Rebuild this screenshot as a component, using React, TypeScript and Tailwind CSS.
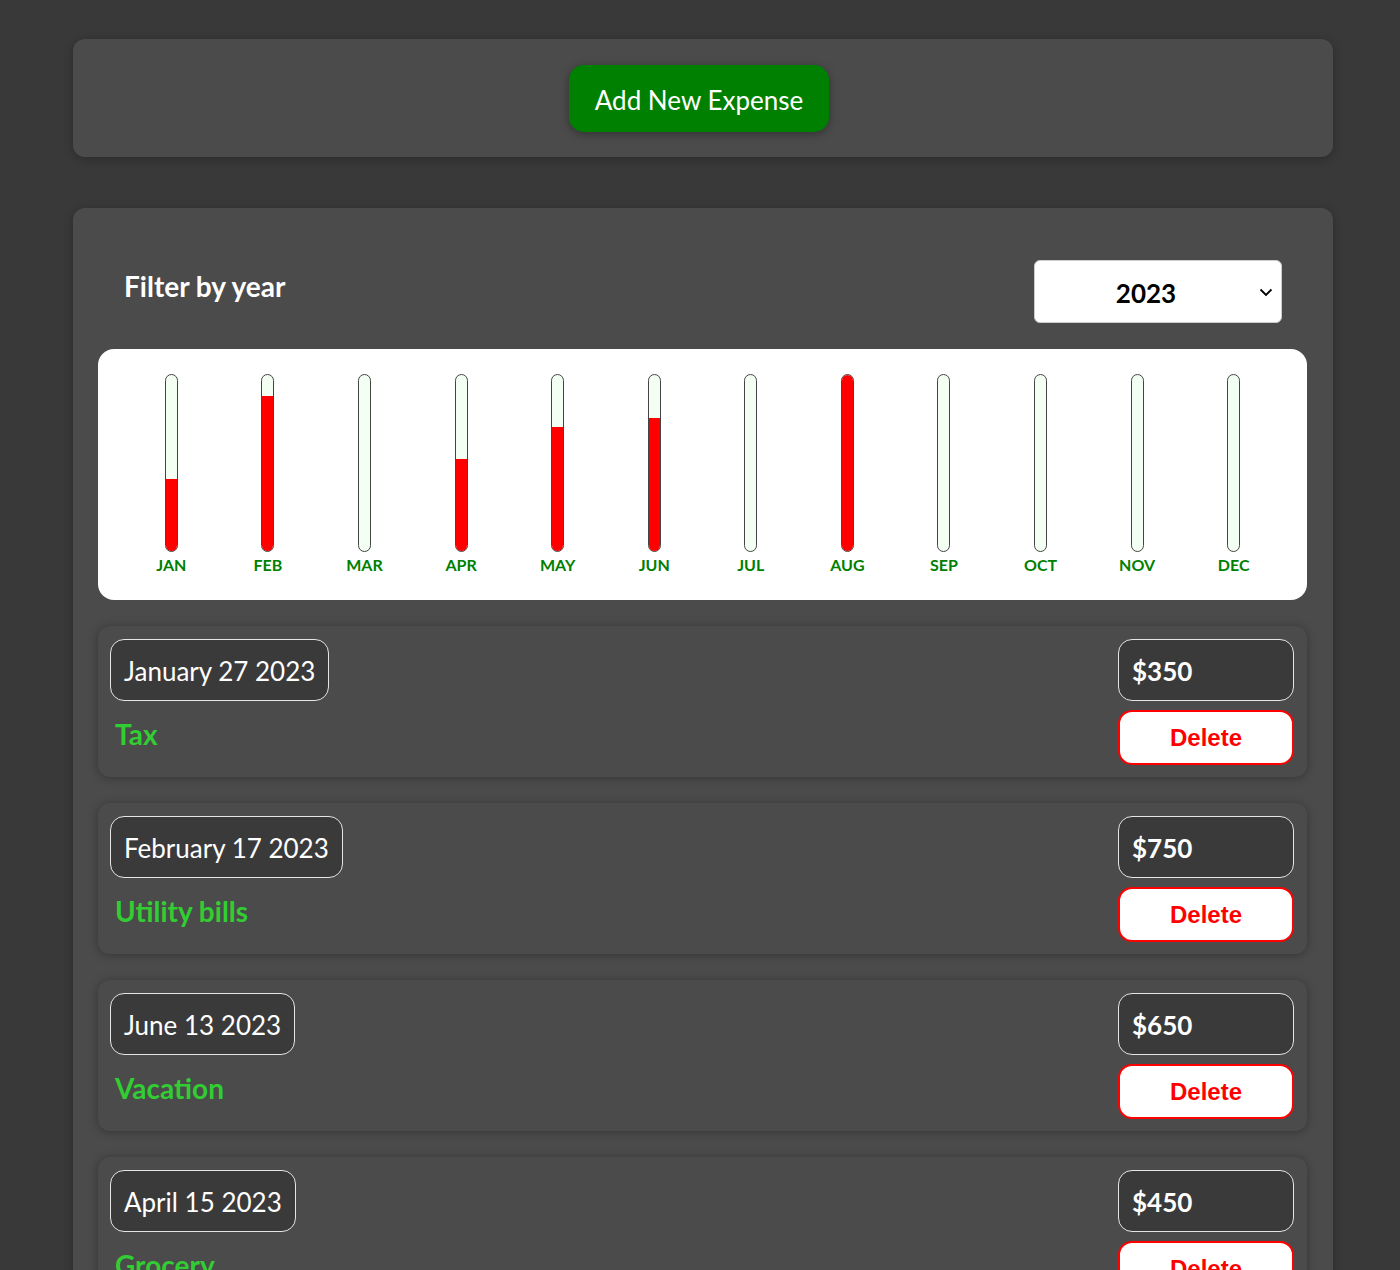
import React, { useState } from 'react';

interface Expense {
  id: number;
  date: string;
  title: string;
  amount: number;
}

const expenses: Expense[] = [
  { id: 1, date: 'January 27 2023', title: 'Tax', amount: 350 },
  { id: 2, date: 'February 17 2023', title: 'Utility bills', amount: 750 },
  { id: 3, date: 'June 13 2023', title: 'Vacation', amount: 650 },
  { id: 4, date: 'April 15 2023', title: 'Grocery', amount: 450 },
];

// fill heights read off the chart
const months = [
  { label: 'JAN', fill: 40.7 },
  { label: 'FEB', fill: 88 },
  { label: 'MAR', fill: 0 },
  { label: 'APR', fill: 52.5 },
  { label: 'MAY', fill: 70.6 },
  { label: 'JUN', fill: 75.8 },
  { label: 'JUL', fill: 0 },
  { label: 'AUG', fill: 100 },
  { label: 'SEP', fill: 0 },
  { label: 'OCT', fill: 0 },
  { label: 'NOV', fill: 0 },
  { label: 'DEC', fill: 0 },
];

function ChartBar({ label, fill }: { label: string; fill: number }) {
  return (
    <div className="flex flex-col items-center">
      <div className="relative h-[178px] w-[13px] overflow-hidden rounded-full border border-[#444] bg-[#f4fff4] flex flex-col justify-end">
        <div className="w-full bg-[#ff0000]" style={{ height: `${fill}%` }} />
      </div>
      <span className="mt-[3px] text-[16px] font-bold leading-[20px] text-[#008000]">{label}</span>
    </div>
  );
}

function ExpenseItem({ expense }: { expense: Expense }) {
  return (
    <div className="flex justify-between rounded-[12px] bg-[#4b4b4b] pl-[12px] pr-[13px] pt-[13px] pb-[12px] shadow-[0_1px_10px_rgba(0,0,0,0.3)]">
      <div className="flex flex-col items-start">
        <div className="flex h-[62px] items-center rounded-[14px] border border-[#e5e5e5] bg-[#3a3a3a] px-[13px] pt-[3px] text-[26px] text-white">
          {expense.date}
        </div>
        <h2 className="mt-[15px] pl-[5px] text-[28px] font-bold leading-[36px] text-[#32cd32]">{expense.title}</h2>
      </div>
      <div className="flex w-[176px] flex-col gap-[9px]">
        <div className="flex h-[62px] items-center rounded-[14px] border border-[#e5e5e5] bg-[#3a3a3a] px-[13px] pt-[3px] text-[26px] font-bold text-white">
          ${expense.amount}
        </div>
        <button className="h-[55px] rounded-[14px] border-2 border-[#ff0000] bg-white text-[24px] font-bold text-[#ff0000] [font-family:'Liberation_Sans',Arial,sans-serif]">
          Delete
        </button>
      </div>
    </div>
  );
}

export default function App() {
  const [year, setYear] = useState('2023');

  return (
    <div className="min-h-screen bg-[#393939] pt-[39px] pb-[40px] [font-family:Lato,'Open_Sans',sans-serif]">
      <div className="ml-[73px] w-[1260px]">
        <div className="flex h-[118px] items-center justify-center rounded-[12px] bg-[#4b4b4b] shadow-[0_2px_10px_rgba(0,0,0,0.25)]">
          <button className="mr-[8px] h-[67px] w-[260px] rounded-[15px] bg-[#008000] pt-[4px] text-[26px] text-white shadow-[0_2px_8px_rgba(0,0,0,0.35)]">
            Add New Expense
          </button>
        </div>

        <div className="mt-[51px] rounded-[12px] bg-[#4b4b4b] pl-[25px] pr-[26px] pt-[52px] pb-[40px] shadow-[0_2px_10px_rgba(0,0,0,0.25)]">
          <div className="flex items-center justify-between pl-[26px] pr-[25px]">
            <label className="-mt-[12px] text-[28px] font-bold text-white">Filter by year</label>
            <div className="relative">
              <select
                value={year}
                onChange={(e) => setYear(e.target.value)}
                className="h-[63px] w-[248px] appearance-none rounded-[6px] border border-[#ccc] bg-white pt-[3px] pr-[24px] text-center text-[26px] font-bold text-black"
              >
                <option>2023</option>
                <option>2022</option>
                <option>2021</option>
              </select>
              <svg
                className="pointer-events-none absolute right-[8px] top-1/2 -translate-y-1/2"
                width="16"
                height="16"
                viewBox="0 0 16 16"
                fill="none"
                stroke="#000"
                strokeWidth="1.8"
              >
                <path d="M2.5 5.5l5.5 5.5 5.5-5.5" />
              </svg>
            </div>
          </div>

          <div className="mt-[26px] grid h-[251px] grid-cols-12 rounded-[16px] bg-white px-[25px] pt-[25px]">
            {months.map((m) => (
              <ChartBar key={m.label} label={m.label} fill={m.fill} />
            ))}
          </div>

          <ul className="mt-[26px] flex flex-col gap-[26px]">
            {expenses.map((e) => (
              <li key={e.id}>
                <ExpenseItem expense={e} />
              </li>
            ))}
          </ul>
        </div>
      </div>
    </div>
  );
}
